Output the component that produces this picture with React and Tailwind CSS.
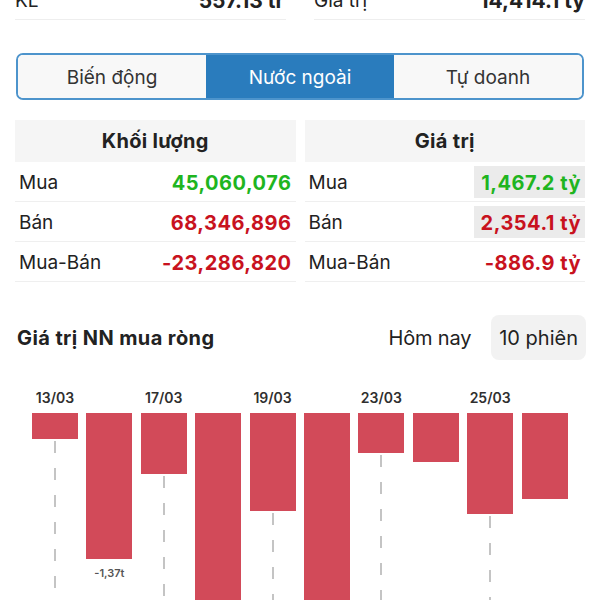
import React from 'react';

const volume = [
  { label: 'Mua', value: '45,060,076', color: 'text-[#1fb51f]' },
  { label: 'Bán', value: '68,346,896', color: 'text-[#c8121e]' },
  { label: 'Mua-Bán', value: '-23,286,820', color: 'text-[#c8121e]' },
];

const amount = [
  { label: 'Mua', value: '1,467.2 tỷ', color: 'text-[#1fb51f]', hl: true },
  { label: 'Bán', value: '2,354.1 tỷ', color: 'text-[#c8121e]', hl: true },
  { label: 'Mua-Bán', value: '-886.9 tỷ', color: 'text-[#c8121e]', hl: false },
];

// bar heights in px from the zero line, labels on every other session
const bars = [
  { h: 26, date: '13/03', line: true },
  { h: 146, note: '-1,37t' },
  { h: 61, date: '17/03', line: true },
  { h: 200 },
  { h: 98, date: '19/03', line: true },
  { h: 200 },
  { h: 40, date: '23/03', line: true },
  { h: 49 },
  { h: 101, date: '25/03', line: true },
  { h: 86 },
];

function Table({ title, rows }) {
  return (
    <div className="flex-1 flex flex-col">
      <div className="h-[42px] bg-[#f5f5f5] flex items-center justify-center text-[20px] font-bold tracking-[0.3px] text-[#222]">
        {title}
      </div>
      {rows.map((r) => (
        <div key={r.label} className="h-[40px] flex items-center justify-between border-b border-[#efefef] pl-[4px] pt-[3px]">
          <span className="text-[19px] text-[#222]">{r.label}</span>
          <span
            className={`h-[32px] -mt-[3px] flex items-center pt-[3px] pl-[7px] pr-[4px] text-[20px] font-bold tracking-[0.5px] ${r.color} ${r.hl ? 'bg-[#ebebeb]' : ''}`}
          >
            {r.value}
          </span>
        </div>
      ))}
    </div>
  );
}

export default function App() {
  return (
    <div className="w-[600px] h-[600px] overflow-hidden bg-white font-['Inter',sans-serif] text-[#222]">
      {/* Summary row, cut at the top */}
      <div className="grid grid-cols-2 gap-[28px] px-[15px] -mt-[11px]">
        <div className="flex justify-between items-center border-b border-[#eeeeee] pb-[6px] leading-[24px]">
          <span className="text-[19px]">KL</span>
          <span className="text-[21px] font-bold pr-[2px]">557.13 tr</span>
        </div>
        <div className="flex justify-between items-center border-b border-[#eeeeee] pb-[6px] leading-[24px]">
          <span className="text-[19px]">Giá trị</span>
          <span className="text-[21px] font-bold">14,414.1 tỷ</span>
        </div>
      </div>

      {/* Tabs */}
      <div className="mx-[16px] mt-[33px] h-[47px] grid grid-cols-3 rounded-[7px] border-2 border-[#4d94cc] overflow-hidden text-[19px]">
        <div className="flex items-center justify-center pt-[3px] bg-[#f8f8f8] text-[#333]">Biến động</div>
        <div className="flex items-center justify-center pt-[3px] bg-[#2a7cbd] text-white">Nước ngoài</div>
        <div className="flex items-center justify-center pt-[3px] bg-[#f8f8f8] text-[#333]">Tự doanh</div>
      </div>

      {/* Foreign flow tables */}
      <div className="flex gap-[9px] pl-[15px] pr-[15px] mt-[20px]">
        <Table title="Khối lượng" rows={volume} />
        <Table title="Giá trị" rows={amount} />
      </div>

      {/* Chart header */}
      <div className="flex items-center justify-between mt-[33px] pl-[17px] pr-[14px] h-[45px] text-[20px]">
        <span className="font-bold tracking-[0.4px] text-[#222]">Giá trị NN mua ròng</span>
        <div className="flex items-center gap-[20px] h-full">
          <span className="tracking-[-0.2px]">Hôm nay</span>
          <span className="h-full flex items-center px-[8px] bg-[#f2f2f2] rounded-[8px]">10 phiên</span>
        </div>
      </div>

      {/* Bars */}
      <div className="flex gap-[8.4px] pl-[32px] mt-[30px]">
        {bars.map((b, i) => (
          <div key={i} className="w-[46px] flex flex-col items-center">
            <div className="h-[16px] leading-[16px] text-[14px] font-semibold text-[#2f2f2f] whitespace-nowrap">
              {b.date || ''}
            </div>
            <div className="mt-[7px] w-full bg-[#d24a59]" style={{ height: b.h }} />
            {b.note && (
              <div className="mt-[7px] text-[11px] font-semibold text-[#555] leading-[14px]">{b.note}</div>
            )}
            {b.line && (
              <div className="mt-[2px] w-[2px] h-[200px] bg-[repeating-linear-gradient(to_bottom,#c4c4c4_0px,#c4c4c4_12px,transparent_12px,transparent_27px)]" />
            )}
          </div>
        ))}
      </div>
    </div>
  );
}
